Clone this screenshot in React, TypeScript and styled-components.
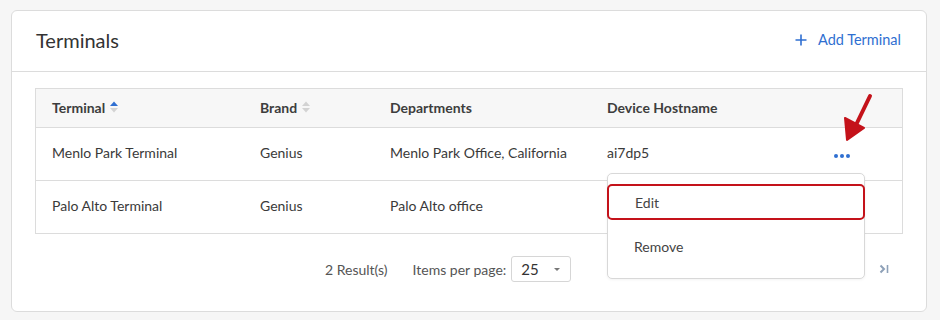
import { FC } from 'react';
import styled, { createGlobalStyle } from 'styled-components';

const GlobalStyle = createGlobalStyle`
  body {
    margin: 0;
    background: #f6f6f6;
    font-family: Lato, 'Open Sans', Arial, sans-serif;
    color: #333;
  }
`;

const Page = styled.div`
  padding: 10px 0 0 11px;
`;

const Card = styled.div`
  position: relative;
  width: 914px;
  height: 300px;
  background: #fff;
  border: 1px solid #dcdcdc;
  border-radius: 6px;
`;

const CardHeader = styled.div`
  box-sizing: border-box;
  height: 61px;
  display: flex;
  align-items: center;
  justify-content: space-between;
  padding: 0 25px 3px 24px;
  border-bottom: 1px solid #dcdcdc;
`;

const Title = styled.h2`
  margin: 0;
  font-size: 20px;
  font-weight: 400;
  color: #333;
`;

const AddLink = styled.a`
  display: flex;
  align-items: center;
  gap: 11px;
  color: #2f6fd1;
  font-size: 14.5px;
  cursor: pointer;
`;

const CardBody = styled.div`
  position: relative;
  padding: 16px 23px 0 23px;
`;

const Table = styled.table`
  width: 868px;
  table-layout: fixed;
  border-collapse: collapse;
  border: 1px solid #dcdcdc;
  font-size: 14px;
`;

const HeadCell = styled.th<{ $w?: number }>`
  height: 36px;
  padding: 0 0 2px 16px;
  background: #f7f7f7;
  text-align: left;
  font-weight: 700;
  color: #3d3d3d;
  width: ${(p) => (p.$w ? `${p.$w - 16}px` : 'auto')};
  border-bottom: 1px solid #dcdcdc;
`;

const Cell = styled.td`
  height: 49px;
  padding: 0 0 3px 16px;
  color: #3a3a3a;
  border-bottom: 1px solid #dcdcdc;
  white-space: nowrap;
`;

const HeadLabel = styled.span`
  display: inline-flex;
  align-items: center;
  gap: 4px;
`;

const DotsButton = styled.span`
  display: inline-flex;
  gap: 2px;
  margin-left: 44px;
  cursor: pointer;
  & > i {
    width: 4px;
    height: 4px;
    border-radius: 50%;
    background: #2f6fd1;
  }
`;

const Footer = styled.div`
  display: flex;
  align-items: center;
  height: 70px;
  padding-left: 290px;
  font-size: 14px;
  color: #555;
`;

const Results = styled.span`
  margin-right: 25px;
`;

const SelectBox = styled.div`
  box-sizing: border-box;
  display: flex;
  align-items: center;
  justify-content: space-between;
  width: 60px;
  height: 26px;
  margin-left: 5px;
  padding: 0 9px 0 9px;
  border: 1px solid #d6d6d6;
  border-radius: 3px;
  font-size: 15px;
  color: #333;
`;

const LastPage = styled.svg`
  margin-left: auto;
  margin-right: 14px;
`;

const Menu = styled.div`
  box-sizing: border-box;
  position: absolute;
  left: 595px;
  top: 101px;
  width: 258px;
  height: 106px;
  padding: 10px 0 0;
  background: #fff;
  border: 1px solid #d8d8d8;
  border-radius: 5px;
  box-shadow: 0 1px 3px rgba(0, 0, 0, 0.05);
`;

const MenuItem = styled.div<{ $marked?: boolean }>`
  box-sizing: border-box;
  display: flex;
  align-items: center;
  height: ${(p) => (p.$marked ? '36px' : '40px')};
  padding-left: 26px;
  margin: ${(p) => (p.$marked ? '0 -1px 6px' : '0')};
  font-size: 14px;
  color: #444;
  border: ${(p) => (p.$marked ? '2px solid #c4121a' : 'none')};
  border-radius: 5px;
`;

const Arrow = styled.svg`
  position: absolute;
  left: 822px;
  top: 80px;
`;

const SortIcon: FC<{ active?: boolean }> = ({ active }) => (
  <svg width="10" height="14" viewBox="0 0 10 14">
    <path d="M1 6 L5 1.5 L9 6 Z" fill={active ? '#2f6fd1' : '#d3d3d3'} />
    <path d="M1 8 L5 12.5 L9 8 Z" fill="#d3d3d3" />
  </svg>
);

const rows = [
  { name: 'Menlo Park Terminal', brand: 'Genius', dept: 'Menlo Park Office, California', host: 'ai7dp5', menu: true },
  { name: 'Palo Alto Terminal', brand: 'Genius', dept: 'Palo Alto office', host: '', menu: false },
];

const App: FC = () => {
  return (
    <Page>
      <GlobalStyle />
      <Card>
        <CardHeader>
          <Title>Terminals</Title>
          <AddLink>
            <svg width="12" height="12" viewBox="0 0 12 12">
              <path d="M6 0.5 V11.5 M0.5 6 H11.5" stroke="#2f6fd1" strokeWidth="1.6" />
            </svg>
            Add Terminal
          </AddLink>
        </CardHeader>
        <CardBody>
          <Table>
            <thead>
              <tr>
                <HeadCell $w={208}>
                  <HeadLabel>
                    Terminal <SortIcon active />
                  </HeadLabel>
                </HeadCell>
                <HeadCell $w={130}>
                  <HeadLabel>
                    Brand <SortIcon />
                  </HeadLabel>
                </HeadCell>
                <HeadCell $w={217}>Departments</HeadCell>
                <HeadCell $w={183}>Device Hostname</HeadCell>
                <HeadCell />
              </tr>
            </thead>
            <tbody>
              {rows.map((r) => (
                <tr key={r.name}>
                  <Cell>{r.name}</Cell>
                  <Cell>{r.brand}</Cell>
                  <Cell>{r.dept}</Cell>
                  <Cell>{r.host}</Cell>
                  <Cell>
                    {r.menu && (
                      <DotsButton>
                        <i />
                        <i />
                        <i />
                      </DotsButton>
                    )}
                  </Cell>
                </tr>
              ))}
            </tbody>
          </Table>
          <Footer>
            <Results>2 Result(s)</Results>
            <span>Items per page:</span>
            <SelectBox>
              25
              <svg width="8" height="5" viewBox="0 0 8 5">
                <path d="M1 1 L4 4 L7 1 Z" fill="#777" />
              </svg>
            </SelectBox>
            <LastPage width="10" height="10" viewBox="0 0 10 10">
              <path d="M1.5 1.5 L5 5 L1.5 8.5" fill="none" stroke="#8ea1b8" strokeWidth="2" />
              <path d="M8.5 1 V9" stroke="#8ea1b8" strokeWidth="1.6" />
            </LastPage>
          </Footer>
          <Menu>
            <MenuItem $marked>Edit</MenuItem>
            <MenuItem>Remove</MenuItem>
          </Menu>
        </CardBody>
        <Arrow width="40" height="56" viewBox="0 0 40 56">
          <path d="M36 5 L21 36" stroke="#c4121a" strokeWidth="4" strokeLinecap="round" />
          <path d="M13 49 L11 27 L30 37 Z" fill="#c4121a" stroke="#c4121a" strokeWidth="2" strokeLinejoin="round" />
        </Arrow>
      </Card>
    </Page>
  );
};

export default App;
